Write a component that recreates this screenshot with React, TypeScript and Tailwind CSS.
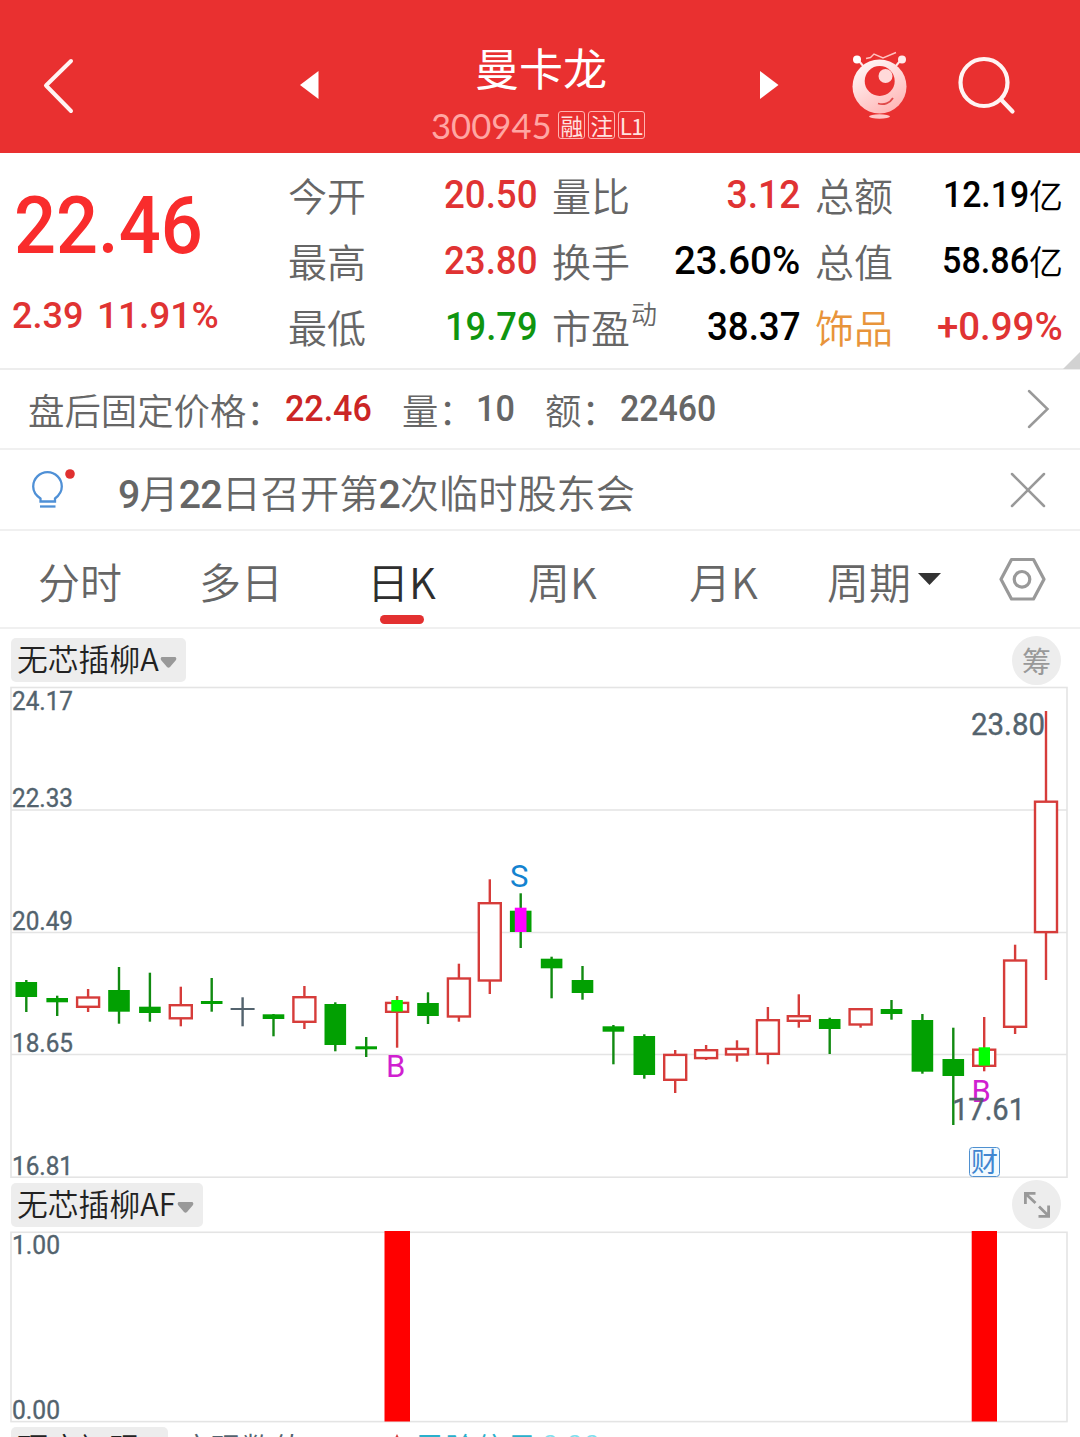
import React from "react";

const CJK = "font-['Noto_Sans_CJK_SC',sans-serif]";
const NUM = "font-['Roboto','Noto_Sans_CJK_SC',sans-serif]";

type Candle = [kind: "g" | "r" | "x", top: number, bottom: number, high: number, low: number];

const candles: Candle[] = [
  ["g", 982, 997, 980, 1012],
  ["g", 998, 1002.3, 995.7, 1016],
  ["r", 996.3, 1008, 989, 1012],
  ["g", 990, 1011.7, 967, 1023.7],
  ["g", 1006.7, 1013, 972.7, 1021.7],
  ["r", 1004, 1019.5, 986.7, 1026.3],
  ["g", 1001, 1004, 978, 1011.7],
  ["x", 1008, 1010, 997.3, 1026.3],
  ["g", 1014.3, 1019, 1014, 1036.3],
  ["r", 996, 1023, 986, 1029],
  ["g", 1004, 1045, 1002.3, 1051.3],
  ["g", 1046.3, 1049.3, 1037, 1057],
  ["r", 1001.7, 1013, 996, 1047.7],
  ["g", 1003, 1016, 992.3, 1024],
  ["r", 977.3, 1017.7, 963.7, 1021.7],
  ["r", 902, 981.7, 879.3, 994],
  ["g", 910.7, 932, 893.3, 948],
  ["g", 958.7, 968.3, 956.7, 998.3],
  ["g", 980, 993, 966, 999.7],
  ["g", 1026.3, 1031.7, 1025, 1064.3],
  ["g", 1036, 1075, 1034.3, 1078.7],
  ["r", 1053.7, 1081, 1050, 1093],
  ["r", 1049, 1059.3, 1045, 1060],
  ["r", 1047.7, 1055.7, 1040.3, 1061.7],
  ["r", 1019, 1055, 1007, 1064.3],
  ["r", 1015, 1022, 994.3, 1027.7],
  ["g", 1019, 1029, 1017.7, 1054],
  ["r", 1008, 1025.7, 1008, 1027.7],
  ["g", 1009, 1014, 1000, 1019.7],
  ["g", 1020, 1071.7, 1014, 1073.7],
  ["g", 1059, 1076, 1027.7, 1125],
  ["r", 1048.5, 1067, 1017, 1071.3],
  ["r", 959.3, 1028, 944.7, 1034],
  ["r", 800.5, 933.3, 711, 980],
];

function CandleMark({ c, i }: { c: Candle; i: number }) {
  const x = 26.3 + 30.9 * i;
  const [kind, top, bottom, high, low] = c;
  if (kind === "x")
    return (
      <g fill="#53636e">
        <rect x={x - 12} y={top} width={24} height={2} />
        <rect x={x - 1.2} y={high} width={2.4} height={low - high} />
      </g>
    );
  if (kind === "g")
    return (
      <g>
        <rect x={x - 1.2} y={high} width={2.4} height={low - high} fill="#118a11" />
        <rect x={x - 10.8} y={top} width={21.6} height={bottom - top} fill="#02a002" />
      </g>
    );
  return (
    <g fill="#d63c3a">
      <rect x={x - 1.2} y={high} width={2.4} height={top - high + 1} />
      <rect x={x - 1.2} y={bottom - 1} width={2.4} height={low - bottom + 1} />
      <rect x={x - 11} y={top + 1.2} width={22} height={bottom - top - 2.4} fill="#fff" stroke="#d63c3a" strokeWidth={2.4} />
    </g>
  );
}

function AxisLabel({ y, children, w = 61 }: { y: number; children: string; w?: number }) {
  return (
    <text x={12} y={y} textLength={w} lengthAdjust="spacingAndGlyphs" className={`${NUM} text-[25px]`} fill="#53636e" stroke="#53636e" strokeWidth={0.35}>
      {children}
    </text>
  );
}

function Header() {
  return (
    <header className="flex h-[153px] bg-[#e93030] text-white">
      <div className="flex w-[300px] pl-[42px] pt-[58px]">
        <svg width="34" height="56" fill="none" stroke="#fff4f3" strokeWidth="4" strokeLinecap="round" strokeLinejoin="round">
          <path d="M29 3 4 27.5 29 53" />
        </svg>
      </div>
      <svg width="20" height="30" className="mt-[70px]" fill="#fff">
        <path d="M0 15 18.5 1V29Z" />
      </svg>
      <div className="flex w-[438px] flex-col items-center pt-[34px]">
        <h1 className={`${CJK} h-[68px] pl-[4px] text-[44px] leading-[66px]`}>曼卡龙</h1>
        <div className="flex h-[46px] w-[216px] items-center">
          <span className="w-[127px] origin-left scale-x-[.99] font-[Lato] text-[35px] leading-[46px] text-[#ffa6a3]">300945</span>
          <span className={`flex gap-[3px] ${CJK} text-[22.5px] text-[#ffe3e1]`}>
            {["融", "注", "L1"].map((t) => (
              <span key={t} className="flex h-[28px] w-[27px] items-center justify-center rounded-[3px] border border-[#ffb3b0] leading-[26px] tracking-tight">
                <span>{t}</span>
              </span>
            ))}
          </span>
        </div>
      </div>
      <svg width="20" height="30" className="ml-[2px] mt-[70px]" fill="#fff">
        <path d="M18.5 15 0 1V29Z" />
      </svg>
      <svg width="64" height="72" viewBox="848 48 64 72" className="ml-[68px] mt-[48px]">
        <defs>
          <linearGradient id="robot" x1="0" y1="0" x2=".6" y2="1">
            <stop offset="0" stopColor="#fff" />
            <stop offset="1" stopColor="#ffb9b9" />
          </linearGradient>
        </defs>
        <path d="M859 61 864 67M900 61 895 67" stroke="#ffe6e6" strokeWidth="2" />
        <circle cx="857" cy="59.500" r="4" fill="#fff" />
        <circle cx="902" cy="59.500" r="4" fill="#ffeaea" />
        <path d="M866 58.500 870.500 57.500 874 54 883 58 896 52.500" fill="none" stroke="#ffc2c0" strokeWidth="1.400" />
        <circle cx="879.500" cy="86.500" r="27" fill="url(#robot)" />
        <circle cx="879.700" cy="81" r="15" fill="#e93030" />
        <circle cx="885.500" cy="76" r="7" fill="#ffd9d9" />
        <path d="M878 103.500C884 105.500 890 103 893 98" fill="none" stroke="#e04a4a" strokeWidth="1.800" />
        <ellipse cx="879.500" cy="116.500" rx="10.500" ry="2.200" fill="#ffc6c6" />
      </svg>
      <svg width="62" height="62" viewBox="956 54 62 62" className="ml-[44px] mt-[54px]" fill="none" stroke="#fff4f3" strokeWidth="4.200" strokeLinecap="round">
        <circle cx="984" cy="82.500" r="23.500" />
        <path d="M1001.500 100 1012.500 111.500" />
      </svg>
    </header>
  );
}

type Stat = { label: string; sup?: string; value: string; tone: string; fit: string; labelTone?: string; unit?: string };

const stats: Stat[][] = [
  [
    { label: "今开", value: "20.50", tone: "text-[#e03333]", fit: "scale-x-[.94]" },
    { label: "量比", value: "3.12", tone: "text-[#e03333]", fit: "scale-x-[.955]" },
    { label: "总额", value: "12.19", unit: "亿", tone: "text-black", fit: "scale-x-[.925]" },
  ],
  [
    { label: "最高", value: "23.80", tone: "text-[#e03333]", fit: "scale-x-[.94]" },
    { label: "换手", value: "23.60%", tone: "text-black", fit: "scale-x-[.985]" },
    { label: "总值", value: "58.86", unit: "亿", tone: "text-black", fit: "scale-x-[.935]" },
  ],
  [
    { label: "最低", value: "19.79", tone: "text-[#0f950f]", fit: "scale-x-[.93]" },
    { label: "市盈", sup: "动", value: "38.37", tone: "text-black", fit: "scale-x-[.94]" },
    { label: "饰品", labelTone: "text-[#e8943a]", value: "+0.99%", tone: "text-[#e03333]", fit: "scale-x-[.985]" },
  ],
];

function Quote() {
  return (
    <section className="relative flex h-[217px] border-b-2 border-[#ededed]">
      <div className={`${NUM} w-[288px] pl-[12px] font-medium text-[#f92c2c]`}>
        <div className="ml-[2px] mt-[25px] h-[96px] origin-left scale-x-[.925] text-[80px] leading-[96px]">22.46</div>
        <div className="mt-[18px] flex h-[48px] text-[37px] leading-[48px] text-[#e03333]">
          <span className="w-[85px] origin-left scale-x-[.975]">2.39</span>
          <span className="origin-left">11.91%</span>
        </div>
      </div>
      <div className="flex flex-1 flex-col pt-[9px]">
        {stats.map((row, r) => (
          <div key={r} className="grid h-[66px] grid-cols-[249px_248px_248px] gap-x-[15px] leading-[66px]">
            {row.map((s) => (
              <div key={s.label} className="flex justify-between">
                <span className={`${CJK} flex text-[39px] font-[350] ${s.labelTone ?? "text-[#666]"}`}>
                  <span className="-mt-px">{s.label}</span>
                  {s.sup && <span className="-mt-[14px] ml-px text-[26px]">{s.sup}</span>}
                </span>
                <span className={`flex ${s.tone}`}>
                  <span className={`${NUM} ${s.unit ? "text-[36.5px]" : "text-[39px]"} origin-right font-medium ${s.fit}`}>{s.value}</span>
                  {s.unit && <span className={`${CJK} text-[34px] font-[350]`}>{s.unit}</span>}
                </span>
              </div>
            ))}
          </div>
        ))}
      </div>
      <svg width="17" height="17" className="absolute -bottom-px right-0" fill="#d2d2d2">
        <path d="M17 0V17H0Z" />
      </svg>
    </section>
  );
}

function AfterHours() {
  return (
    <section className={`${CJK} flex h-[80px] items-center border-b-2 border-[#f0f0f0] pl-[28px] pr-[29px] text-[36.4px] font-[350] text-[#666]`}>
      <span className="w-[257px]">盘后固定价格：</span>
      <span className={`${NUM} w-[117px] origin-left scale-x-[.945] text-[36px] font-medium text-[#cb2525]`}>22.46</span>
      <span className="w-[74px]">量：</span>
      <span className={`${NUM} w-[69px] origin-left scale-x-[.95] text-[36px] font-medium`}>10</span>
      <span className="w-[75px]">额：</span>
      <span className={`${NUM} origin-left scale-x-[.94] text-[36px] font-medium`}>22460</span>
      <svg width="24" height="40" className="ml-auto" fill="none" stroke="#999" strokeWidth="2.500" strokeLinecap="round">
        <path d="M2 2 20.500 20 2 38" />
      </svg>
    </section>
  );
}

function Notice() {
  return (
    <section className="flex h-[81px] items-center border-b-2 border-[#f0f0f0] pl-[30px] pr-[34px]">
      <svg width="48" height="46" viewBox="30 467 48 46" fill="none">
        <path d="M40.500 501.500V498.500C36 495.500 33.200 491.500 33.200 486.500A14.300 14.300 0 0 1 61.800 486.500C61.800 491.500 59 495.500 55 498.500V501.500Z" stroke="#4f90d6" strokeWidth="2.300" />
        <path d="M40 506.500H55.500" stroke="#4f90d6" strokeWidth="2.300" />
        <circle cx="70" cy="474" r="4.800" fill="#e03030" />
      </svg>
      <p className={`${NUM} ml-[40px] pt-[12px] text-[39.2px] font-[350] text-[#666]`}>
        {["9", "月", "22", "日召开第", "2", "次临时股东会"].map((t, i) => (
          <span key={i} className={/\d/.test(t) ? "font-medium tracking-[-.8px]" : ""}>
            {t}
          </span>
        ))}
      </p>
      <svg width="36" height="36" className="ml-auto" fill="none" stroke="#999" strokeWidth="2.500" strokeLinecap="round">
        <path d="M2 2 34 34M34 2 2 34" />
      </svg>
    </section>
  );
}

function Tabs() {
  return (
    <nav className={`${CJK} flex h-[98px] items-center border-b-2 border-[#f0f0f0] pl-[38px] text-[42px] font-[350] text-[#666] [&>span]:pt-[3px]`}>
      <span className="w-[161px]">分时</span>
      <span className="w-[168px]">多日</span>
      <span className="relative w-[161px] text-[#2e2e2e]">
        日K
        <i className="absolute -bottom-[12px] left-[13px] h-[9px] w-[44px] rounded-full bg-[#e33030]" />
      </span>
      <span className="w-[161px]">周K</span>
      <span className="w-[138px]">月K</span>
      <span>周期</span>
      <svg width="24" height="12" className="ml-[7px]" fill="#333">
        <path d="M0 0H23L11.500 12Z" />
      </svg>
      <svg width="48" height="44" viewBox="998 557 48 44" className="ml-[56px]" fill="none" stroke="#999" strokeWidth="3.200" strokeLinejoin="round">
        <path d="M1011.500 559.500H1033.500L1044 579.300 1033.500 599H1011.500L1001 579.300Z" />
        <circle cx="1022" cy="579.300" r="7.800" />
      </svg>
    </nav>
  );
}

function Indicator({ name }: { name: string }) {
  return (
    <span className={`${CJK} flex h-[44px] items-center rounded-[5px] bg-[#ededed] pl-[6px] pr-[9px] text-[30.8px] font-[350] leading-[44px] text-[#222]`}>
      <span className="-mt-[5px]">{name}</span>
      <svg width="17" height="12" className="ml-[1px] mt-[5px]" fill="#999">
        <path d="M1.500 0H15.500Q17 1.500 16 3L10 10Q8.500 11.500 7 10L1 3Q0 1.500 1.500 0Z" />
      </svg>
    </span>
  );
}

export default function App() {
  return (
    <main className="h-[1437px] w-[1080px] overflow-hidden bg-white">
      <Header />
      <Quote />
      <AfterHours />
      <Notice />
      <Tabs />
      <div className="flex h-[57px] items-start justify-between pl-[11px] pr-[19px] pt-[9px]">
        <Indicator name="无芯插柳A" />
        <span className={`${CJK} -mt-[2px] flex h-[49px] w-[49px] items-center justify-center rounded-full bg-[#ededed] text-[29px] text-[#999]`}>筹</span>
      </div>
      <svg width="1080" height="492" viewBox="0 686 1080 492" className="block">
        <g fill="none" stroke="#e4e4e4" strokeWidth="1.600">
          <rect x="11" y="687.500" width="1056" height="489.700" />
          <path d="M11 810H1067M11 932.500H1067M11 1054.500H1067" />
        </g>
        {candles.map((c, i) => (
          <CandleMark key={i} c={c} i={i} />
        ))}
        <rect x="391.300" y="1000" width="11.500" height="11.500" fill="#00ff00" />
        <rect x="514.800" y="907.700" width="11.700" height="24.300" fill="#ff00ff" />
        <rect x="978.700" y="1047.300" width="11.300" height="18.300" fill="#00ff00" />
        <AxisLabel y={710}>24.17</AxisLabel>
        <AxisLabel y={807}>22.33</AxisLabel>
        <AxisLabel y={930}>20.49</AxisLabel>
        <AxisLabel y={1052}>18.65</AxisLabel>
        <AxisLabel y={1175}>16.81</AxisLabel>
        <g className={NUM} fontSize="31">
          <text x="510" y="887" fill="#1483d0">S</text>
          <text x="386" y="1077" fill="#d01fd0">B</text>
          <text x="971.500" y="1102" fill="#d01fd0">B</text>
          <g fill="#53636e" stroke="#53636e" strokeWidth=".4">
            <text x="971" y="735" textLength="74" lengthAdjust="spacingAndGlyphs">23.80</text>
            <text x="952" y="1120" textLength="73" lengthAdjust="spacingAndGlyphs">17.61</text>
          </g>
        </g>
        <rect x="969.500" y="1147.500" width="30" height="29" rx="3" fill="#f2faff" stroke="#4f90d0" />
        <text x="971" y="1172" fontSize="27" className={CJK} fill="#4186d0">财</text>
      </svg>
      <div className="flex h-[53px] items-start justify-between pl-[11px] pr-[19px] pt-[5px]">
        <Indicator name="无芯插柳AF" />
        <span className="-mt-[3px] flex h-[49px] w-[49px] items-center justify-center rounded-full bg-[#ededed]">
          <svg width="28" height="28" fill="none" stroke="#999" strokeWidth="2.800">
            <path d="M2.400 13V2.400H12.500M2.400 2.400 12.500 12M16 15.500 25.600 25M25.600 14.500V25.400H15.500" />
          </svg>
        </span>
      </div>
      <svg width="1080" height="192" viewBox="0 1231 1080 192" className="block">
        <rect x="11" y="1232.300" width="1056" height="189.300" fill="none" stroke="#e4e4e4" strokeWidth="1.600" />
        <rect x="384.500" y="1231" width="25.500" height="190.500" fill="#f00" />
        <rect x="971.700" y="1231" width="25.300" height="190.500" fill="#f00" />
        <AxisLabel y={1254} w={48}>1.00</AxisLabel>
        <AxisLabel y={1419} w={48}>0.00</AxisLabel>
      </svg>
      <div className={`${CJK} flex h-[44px] items-start pl-[11px] pt-[4px] text-[30.800px] font-[350] leading-[40px]`}>
        <span className="w-[157px] rounded-[5px] bg-[#ededed] pl-[6px] text-[#222]">顶底初现</span>
        <span className="ml-[12px] text-[#53636e]">底现数值</span>
        <svg width="8" height="8" className="ml-[90px] mt-[7px]" fill="#d63c3a">
          <path d="M4 0 8 8H0Z" />
        </svg>
        <span className="ml-[13px] text-[#2ab0cc]">风险信号</span>
        <span className={`${NUM} ml-[4px] text-[31px] text-[#7fe0ee]`}>0.00</span>
      </div>
    </main>
  );
}
